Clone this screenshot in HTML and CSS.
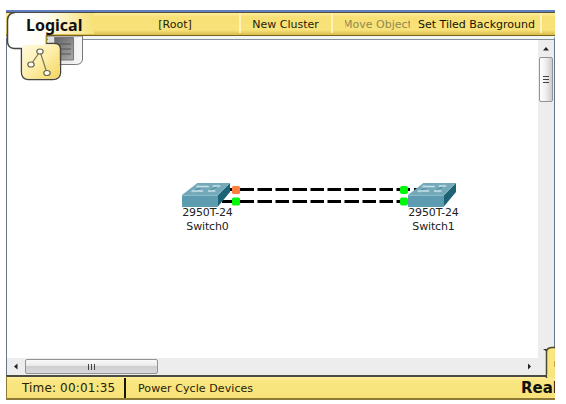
FILE: index.html
```html
<!DOCTYPE html>
<html lang="en">
<head>
<meta charset="utf-8">
<title>Logical Workspace</title>
<link rel="stylesheet" href="styles.css">
</head>
<body>
<main class="window">
  <header class="toolbar">
    <div class="cell root"><span>[Root]</span></div>
    <div class="cell cluster"><span>New Cluster</span></div>
    <div class="cell move"><span>Move Object</span></div>
    <div class="cell tiled"><span>Set Tiled Background</span></div>
    <div class="cell rest"></div>
  </header>
  <section class="workspace">
    <div class="canvas">
      <svg class="links" width="531" height="319" viewBox="7 40 531 319">
        <g stroke="#000" stroke-width="3" fill="none">
          <path d="M227 189.5H254M257.5 189.5H272M275.500 189.5H289M292.500 189.5H307M310.500 189.5H324M327.500 189.5H341M344.500 189.5H359M362.500 189.5H376M379.500 189.5H393M396.500 189.5H410M414 189.5H419"/>
          <path d="M222 201.500H254M257.5 201.500H272M275.500 201.500H289M292.500 201.500H307M310.500 201.500H324M327.500 201.500H341M344.500 201.500H359M362.500 201.500H376M379.500 201.500H393M396.500 201.500H410"/>
        </g>
      </svg>
      <div class="device left">
        <svg width="48" height="24" viewBox="0 0 50 24" preserveAspectRatio="none"><use href="#switch"/></svg>
        <span>2950T-24</span><span>Switch0</span>
      </div>
      <div class="device right">
        <svg width="48" height="24" viewBox="0 0 50 24" preserveAspectRatio="none"><use href="#switch"/></svg>
        <span>2950T-24</span><span>Switch1</span>
      </div>
      <svg class="links" width="531" height="319" viewBox="7 40 531 319">
        <rect x="232" y="186" width="8" height="8" rx="1.500" fill="#ff7d40"/>
        <rect x="232" y="197.500" width="8" height="8" rx="1.500" fill="#00f808"/>
        <rect x="400" y="186" width="8" height="8" rx="2" fill="#00f808"/>
        <rect x="400" y="197.500" width="8" height="8" rx="2" fill="#00f808"/>
      </svg>
    </div>
    <div class="vbar">
      <svg width="16" height="17"><path d="M5 10.500L8 7l3 3.500z" fill="#222"/></svg>
      <div class="vthumb"><i></i><i></i><i></i></div>
    </div>
    <div class="hbar">
      <svg width="18" height="16"><path d="M10.500 4.500v6L7 7.500z" fill="#222"/></svg>
      <div class="hthumb"><i></i><i></i><i></i></div>
      <svg class="next" width="18" height="16"><path d="M8 4.500v6L11 7.500z" fill="#222"/></svg>
    </div>
    <div class="corner"></div>
  </section>
  <footer class="status">
    <div class="time">Time: 00:01:35</div>
    <div class="power">Power Cycle Devices</div>
    <div class="mode">Real</div>
  </footer>
  <svg class="realtab" width="12" height="32" viewBox="543 346 12 32">
    <path d="M543 349h4v3z" fill="#333"/>
    <path d="M546.500 378V352q0-4 5-4.500H556V378z" fill="#f9e680" stroke="#4b4832" stroke-width="1.500"/>
    <path d="M547.300 374H556v4h-8.700z" fill="#f9e680"/>
    <path d="M554.500 361v6" stroke="#c7a73d"/>
  </svg>
  <div class="viewtab">
    <svg width="90" height="72" viewBox="6 10 90 72">
      <defs>
        <linearGradient id="fade" gradientUnits="userSpaceOnUse" x1="22" y1="30" x2="94" y2="23"><stop stop-color="#fff"/><stop offset=".35" stop-color="#fffdf0"/><stop offset="1" stop-color="#f7e176"/></linearGradient>
        <linearGradient id="gold" x1="0" y1="0" x2="1" y2="1"><stop stop-color="#fff9df"/><stop offset=".45" stop-color="#fff0b0"/><stop offset="1" stop-color="#f3d65c"/></linearGradient>
        <linearGradient id="silver" x1="0" y1="0" x2="1" y2="0"><stop stop-color="#ddd"/><stop offset="1" stop-color="#f7f7f7"/></linearGradient>
        <linearGradient id="screen" x1="0" y1="0" x2="1" y2="1"><stop stop-color="#636367"/><stop offset="1" stop-color="#aaa"/></linearGradient>
        <g id="switch">
          <path d="M0 12L16 0H50L37 12z" fill="#74a9ba"/>
          <path d="M0 12H37V24H0z" fill="#5c9bb0"/>
          <path d="M37 12L50 0V9L37 24z" fill="#1e6375"/>
          <path d="M.5 12.500H37L49 .5" fill="none" stroke="#8dbbc8"/>
          <path d="M17 3.500H28M32 3H39M11 8H22M27 8H34" stroke="#c9e3ea" stroke-width="1.300"/>
          <path d="M19 5L14 7M36 4L30 7" stroke="#4d8597"/>
          <path d="M17 1.500L14 4l4 1zM37 1.500L41 3l-4 1.500zM12 6.500L9 8.500l4 1zM32 6.500L36 8l-4 1.500z" fill="#b4d5df"/>
        </g>
      </defs>
      <path d="M47 36H82.500V59q0 5-6 5.500H55" fill="url(#silver)" stroke="#777"/>
      <path d="M54.500 37.500H73.500V60H56z" fill="url(#screen)" stroke="#777"/>
      <path d="M60 44H71M60 49H71M60 54H71" stroke="#555"/>
      <path d="M7.500 43V20Q8 13.500 15 13H94V34H46.500V49H22Q9 49 7.500 43z" fill="url(#fade)"/>
      <path d="M15 12.500H96" stroke="#484a46"/>
      <path d="M46.500 35.500V43.500H55Q60.500 44 60.500 49V73Q60 79.500 53 79.500H28Q21.500 79 21.500 72V48.500H14Q8 48 7.500 42V20Q8 13 15 12.500" fill="none" stroke="#47453d" stroke-width="1.500"/>
      <path d="M22.300 45H46V44.300H55Q59.700 44.500 59.700 49V73Q59 78.700 53 78.700H28Q22.300 78 22.300 72z" fill="url(#gold)"/>
      <path d="M46.500 36V43" stroke="#9a8b35"/><path d="M46 34.500H94" stroke="#d9bd4e"/><path d="M46 35.500H96" stroke="#79651c"/>
      <path d="M31 64.500L40 51.500L47 73" fill="none" stroke="#777560" stroke-width="1.200"/>
      <g fill="#fffdf0" stroke="#686755" stroke-width="1.200"><ellipse cx="40" cy="51.500" rx="3.200" ry="2.500"/><ellipse cx="31" cy="64.500" rx="3.200" ry="2.500"/><ellipse cx="47" cy="73" rx="3.200" ry="2.500"/></g>
    </svg>
    <span>Logical</span>
  </div>
</main>
</body>
</html>
```

FILE: styles.css
```css
* { box-sizing: border-box; }
body { margin: 0; background: #fff; font-family: "DejaVu Sans", sans-serif; font-size: 11px; color: #242208; overflow: hidden; }
.window { position: relative; width: 549px; height: 390px; margin: 10px 0 0 6px; display: grid; grid-template-rows: 26px 339px 25px; overflow: hidden; white-space: nowrap; }
.toolbar { display: flex; border-top: 2px solid #607ec0; border-bottom: 1px solid #79651c; background: linear-gradient(#555239 1px, #ffee9d 1px, #f7e176 5px, #f8e27a 18px, #d9bd4e); }
.cell { height: 20px; margin-top: 1px; border-right: 2px solid #fff3b5; line-height: 23px; text-align: center; flex: none; }
.cell span { display: inline-block; }
.root { width: 235px; padding-left: 105px; }
.cluster { width: 92px; padding-right: 1px; }
.move { width: 77px; padding-left: 12px; border: 0; color: #92894e; }
.move span { width: 65px; overflow: hidden; text-indent: -2px; text-align: left; }
.tiled { width: 132px; padding-left: 8px; text-align: left; color: #171500; }
.rest { flex: 1; border: 0; }
.workspace { display: grid; grid-template-columns: 531px 16px; grid-template-rows: 319px 17px; border-left: 1px solid #65788b; border-right: 1px solid #65788b; border-top: 3px solid #f4f6f6; box-shadow: inset 0 1px #83919a; background: #fff; }
.canvas { position: relative; border-top: 1px solid #83919a; }
.links { position: absolute; left: 0; top: 0; }
.device { position: absolute; top: 143px; width: 51px; display: flex; flex-direction: column; align-items: center; line-height: 14px; letter-spacing: -.15px; color: #222; }
.device svg { margin-bottom: -1px; align-self: flex-start; flex: none; }
.left { left: 175px; }
.right { left: 401px; }
.vbar, .hbar, .corner { background: #ededee; }
.vbar { border-top: 1px solid #83919a; }
.vbar svg, .hbar svg { display: block; flex: none; }
.vthumb { width: 14px; height: 45px; margin-left: 1px; border: 1px solid #939393; border-radius: 2px; background: linear-gradient(90deg, #fff, #eee 50%, #ccc); display: flex; flex-direction: column; align-items: center; justify-content: center; gap: 2px; }
.vthumb i { width: 6px; height: 1px; background: #444; }
.hbar { display: flex; align-items: center; }
.hthumb { width: 133px; height: 15px; border: 1px solid #939393; border-radius: 2px; background: linear-gradient(#fafafa, #e8e8e8 48%, #cfcfd2 50%, #d9d9dc); display: flex; align-items: center; justify-content: center; gap: 2px; }
.hthumb i { width: 1px; height: 6px; background: #444; }
.next { margin-left: auto; }
.status { display: flex; align-items: center; border-top: 2px solid #4b4a43; border-bottom: 2px solid #8d7a36; border-left: 1px solid #8d7a36; background: linear-gradient(#ffef9e, #f9e680 4px, #f8e27a); }
.time { width: 119px; height: 20px; line-height: 21px; padding-left: 15px; border-right: 2px solid #171500; font-size: 12px; letter-spacing: .15px; }
.power { padding: 2px 0 0 12px; letter-spacing: .08px; }
.mode { margin-left: auto; width: 34px; overflow: hidden; font-size: 15px; font-weight: 700; color: #111; }
.realtab { position: absolute; right: 0; top: 336px; }
.viewtab { position: absolute; left: 0; top: 0; }
.viewtab svg { display: block; }
.viewtab span { position: absolute; left: 20px; top: 6px; font-family: "Noto Sans", "DejaVu Sans", sans-serif; font-size: 16px; line-height: 18px; font-weight: 700; color: #111; }
```
